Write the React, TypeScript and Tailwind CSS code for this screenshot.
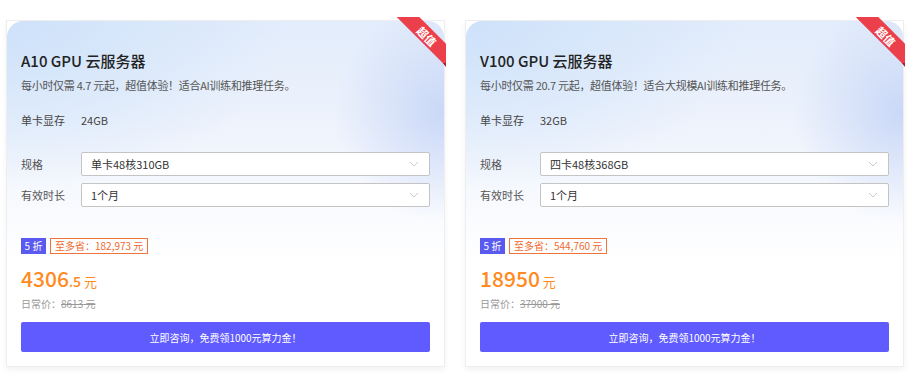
import React from "react";

/**
 * GPU 云服务器 pricing cards — two side-by-side offers with spec selects,
 * discount tags, price and a consult CTA.
 */

const FONT = { fontFamily: '"Noto Sans CJK SC", "Noto Sans", sans-serif' };

interface Offer {
  name: string;
  desc: string;
  mem: string;
  spec: string;
  save: string;
  price: string;
  decimal?: string;
  original: string;
}

const offers: Offer[] = [
  {
    name: "A10 GPU 云服务器",
    desc: "每小时仅需 4.7 元起，超值体验！适合AI训练和推理任务。",
    mem: "24GB",
    spec: "单卡48核310GB",
    save: "182,973",
    price: "4306",
    decimal: ".5",
    original: "8613",
  },
  {
    name: "V100 GPU 云服务器",
    desc: "每小时仅需 20.7 元起，超值体验！适合大规模AI训练和推理任务。",
    mem: "32GB",
    spec: "四卡48核368GB",
    save: "544,760",
    price: "18950",
    original: "37900",
  },
];

function Chevron() {
  return (
    <svg width="10" height="6" viewBox="0 0 10 6" fill="none">
      <polyline points="1,1 5,5 9,1" stroke="#c8cbd2" strokeWidth="1" />
    </svg>
  );
}

function SelectRow({ label, value }: { label: string; value: string }) {
  return (
    <div className="flex items-center">
      <div className="w-[60px] text-[11px] leading-[16px] text-[#555]">{label}</div>
      <div className="flex h-[24px] flex-1 items-center justify-between rounded-[2px] border border-[#c4c4c4] bg-white pl-[9px] pr-[10px]">
        <span className="text-[11px] leading-[16px] text-[#333]">{value}</span>
        <Chevron />
      </div>
    </div>
  );
}

function Ribbon() {
  return (
    <div className="absolute right-[-2px] top-[-4px] h-[50px] w-[50px] overflow-hidden">
      <div className="absolute left-[-6px] top-[11px] flex h-[16px] w-[74px] rotate-45 items-center justify-center bg-[#ec3f4c]">
        <span className="text-[11px] font-bold leading-none text-white">超值</span>
      </div>
      {/* fold at the card edge */}
      <div className="absolute bottom-0 right-0 h-0 w-0 border-l-[3px] border-t-[4px] border-l-transparent border-t-[#a5202b]" />
    </div>
  );
}

function Card({ o }: { o: Offer }) {
  return (
    <div className="relative w-[439px] border border-[#eeeeee] bg-white shadow-[0_3px_6px_rgba(0,0,0,0.05)]">
      {/* header wash */}
      <div className="absolute left-0 right-0 top-0 h-[240px] rounded-t-[16px] bg-[radial-gradient(ellipse_110px_110px_at_100%_38%,rgba(190,207,246,0.75),rgba(190,207,246,0)),radial-gradient(ellipse_280px_170px_at_0%_0%,rgba(206,226,250,1),rgba(206,226,250,0)),linear-gradient(180deg,#e2ecfb_0%,#eef3fc_45%,#ffffff_100%)]" />
      <Ribbon />

      <div className="relative px-[14px] pb-[14px] pt-[28px]">
        <div className="text-[15px] font-medium leading-[24px] text-[#222]">{o.name}</div>
        <div className="mt-[3px] text-[11px] leading-[18px] tracking-[-0.3px] text-[#555]">{o.desc}</div>

        <div className="mt-[17px] flex text-[11px] leading-[18px] text-[#444]">
          <span className="w-[60px]">单卡显存</span>
          <span>{o.mem}</span>
        </div>

        <div className="mt-[23px] flex flex-col gap-[7px]">
          <SelectRow label="规格" value={o.spec} />
          <SelectRow label="有效时长" value="1个月" />
        </div>

        <div className="mt-[31px] flex h-[16px] items-center gap-[4px]">
          <span className="flex h-[16px] w-[25px] items-center justify-center bg-[#5b5af0] text-[10px] leading-none text-white">5 折</span>
          <span className="flex h-[16px] items-center border border-[#f0743a] px-[4px] text-[10px] leading-none text-[#f06a2c]">
            至多省：{o.save} 元
          </span>
        </div>

        <div className="mt-[10px] flex h-[28px] items-baseline text-[#ff8a22]">
          <span className="text-[21px] font-medium leading-[28px]">{o.price}</span>
          {o.decimal && <span className="text-[14px] font-medium leading-[28px]">{o.decimal}</span>}
          <span className="ml-[3px] text-[13px] leading-[28px]">元</span>
        </div>

        <div className="mt-[5px] text-[10px] leading-[14px] text-[#999]">
          日常价：<span className="line-through">{o.original} 元</span>
        </div>

        <button className="mt-[11px] flex h-[30px] w-full items-center justify-center rounded-[2px] bg-[#5f5bff] text-[10px] text-white">
          立即咨询，免费领1000元算力金！
        </button>
      </div>
    </div>
  );
}

export default function App() {
  return (
    <div className="flex h-[380px] w-[915px] items-start gap-[20px] bg-white pl-[6px] pt-[20px]" style={FONT}>
      {offers.map((o) => (
        <Card key={o.name} o={o} />
      ))}
    </div>
  );
}
